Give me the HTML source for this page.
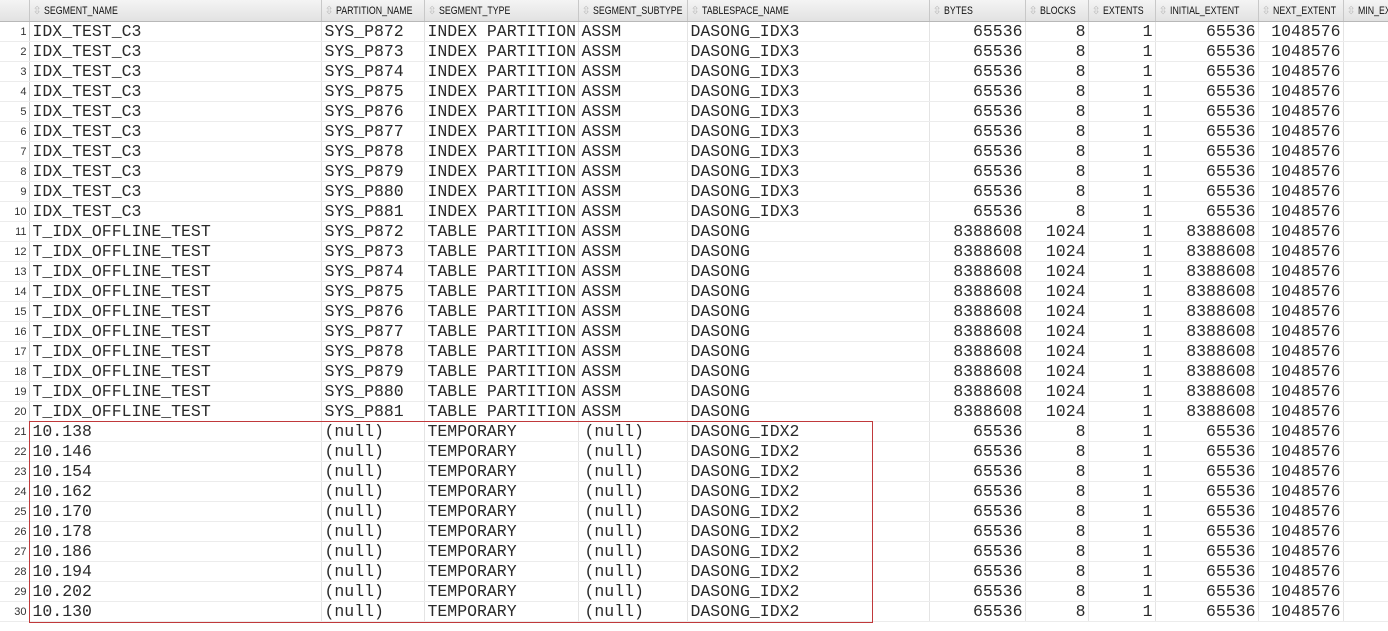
<!DOCTYPE html><html><head><style>
body{margin:0;width:1388px;height:631px;overflow:hidden;background:#fff;position:relative}
table{border-collapse:collapse;table-layout:fixed;position:absolute;left:0;top:0;width:1400px}
td,th{padding:0;overflow:hidden;white-space:nowrap;border-right:1px solid #e4e4e4;border-bottom:1px solid #ececec}
th{height:21px;background:linear-gradient(#f4f4f4,#e2e2e2);border-right:1px solid #c8c8c8;border-bottom:1px solid #b8b8b8;font:11px "Liberation Sans",sans-serif;color:#111;text-align:left;font-weight:normal}
th span{color:#bbb;font-size:11px;margin:0 2px 0 3px;display:inline-block;vertical-align:middle}
th b{font-weight:normal;display:inline-block;transform:scaleX(0.8);transform-origin:left center;vertical-align:middle}
td{height:19px;font:16.5px "Liberation Mono",monospace;color:#2a2a2a;padding-left:3px;line-height:19px}
td.n{font:11px "Liberation Sans",sans-serif;text-align:right;padding:0 2px 0 0;color:#333;border-right:1px solid #d0d0d0}
td.r{text-align:right;padding:0 2px 0 0}
td.s{padding-left:6px}
.box{position:absolute;left:29px;top:421px;width:842px;height:200px;border:1px solid #c0393b}
</style></head><body>
<table>
<colgroup><col style="width:29px"><col style="width:292px"><col style="width:103px"><col style="width:154px"><col style="width:109px"><col style="width:242px"><col style="width:96px"><col style="width:63px"><col style="width:67px"><col style="width:103px"><col style="width:85px"><col style="width:57px"></colgroup>
<tr><th></th><th><span>⇳</span><b>SEGMENT_NAME</b></th><th><span>⇳</span><b>PARTITION_NAME</b></th><th><span>⇳</span><b>SEGMENT_TYPE</b></th><th><span>⇳</span><b>SEGMENT_SUBTYPE</b></th><th><span>⇳</span><b>TABLESPACE_NAME</b></th><th><span>⇳</span><b>BYTES</b></th><th><span>⇳</span><b>BLOCKS</b></th><th><span>⇳</span><b>EXTENTS</b></th><th><span>⇳</span><b>INITIAL_EXTENT</b></th><th><span>⇳</span><b>NEXT_EXTENT</b></th><th><span>⇳</span><b>MIN_EXTENTS</b></th></tr>
<tr><td class="n">1</td><td>IDX_TEST_C3</td><td>SYS_P872</td><td>INDEX PARTITION</td><td>ASSM</td><td>DASONG_IDX3</td><td class="r">65536</td><td class="r">8</td><td class="r">1</td><td class="r">65536</td><td class="r">1048576</td><td></td></tr>
<tr><td class="n">2</td><td>IDX_TEST_C3</td><td>SYS_P873</td><td>INDEX PARTITION</td><td>ASSM</td><td>DASONG_IDX3</td><td class="r">65536</td><td class="r">8</td><td class="r">1</td><td class="r">65536</td><td class="r">1048576</td><td></td></tr>
<tr><td class="n">3</td><td>IDX_TEST_C3</td><td>SYS_P874</td><td>INDEX PARTITION</td><td>ASSM</td><td>DASONG_IDX3</td><td class="r">65536</td><td class="r">8</td><td class="r">1</td><td class="r">65536</td><td class="r">1048576</td><td></td></tr>
<tr><td class="n">4</td><td>IDX_TEST_C3</td><td>SYS_P875</td><td>INDEX PARTITION</td><td>ASSM</td><td>DASONG_IDX3</td><td class="r">65536</td><td class="r">8</td><td class="r">1</td><td class="r">65536</td><td class="r">1048576</td><td></td></tr>
<tr><td class="n">5</td><td>IDX_TEST_C3</td><td>SYS_P876</td><td>INDEX PARTITION</td><td>ASSM</td><td>DASONG_IDX3</td><td class="r">65536</td><td class="r">8</td><td class="r">1</td><td class="r">65536</td><td class="r">1048576</td><td></td></tr>
<tr><td class="n">6</td><td>IDX_TEST_C3</td><td>SYS_P877</td><td>INDEX PARTITION</td><td>ASSM</td><td>DASONG_IDX3</td><td class="r">65536</td><td class="r">8</td><td class="r">1</td><td class="r">65536</td><td class="r">1048576</td><td></td></tr>
<tr><td class="n">7</td><td>IDX_TEST_C3</td><td>SYS_P878</td><td>INDEX PARTITION</td><td>ASSM</td><td>DASONG_IDX3</td><td class="r">65536</td><td class="r">8</td><td class="r">1</td><td class="r">65536</td><td class="r">1048576</td><td></td></tr>
<tr><td class="n">8</td><td>IDX_TEST_C3</td><td>SYS_P879</td><td>INDEX PARTITION</td><td>ASSM</td><td>DASONG_IDX3</td><td class="r">65536</td><td class="r">8</td><td class="r">1</td><td class="r">65536</td><td class="r">1048576</td><td></td></tr>
<tr><td class="n">9</td><td>IDX_TEST_C3</td><td>SYS_P880</td><td>INDEX PARTITION</td><td>ASSM</td><td>DASONG_IDX3</td><td class="r">65536</td><td class="r">8</td><td class="r">1</td><td class="r">65536</td><td class="r">1048576</td><td></td></tr>
<tr><td class="n">10</td><td>IDX_TEST_C3</td><td>SYS_P881</td><td>INDEX PARTITION</td><td>ASSM</td><td>DASONG_IDX3</td><td class="r">65536</td><td class="r">8</td><td class="r">1</td><td class="r">65536</td><td class="r">1048576</td><td></td></tr>
<tr><td class="n">11</td><td>T_IDX_OFFLINE_TEST</td><td>SYS_P872</td><td>TABLE PARTITION</td><td>ASSM</td><td>DASONG</td><td class="r">8388608</td><td class="r">1024</td><td class="r">1</td><td class="r">8388608</td><td class="r">1048576</td><td></td></tr>
<tr><td class="n">12</td><td>T_IDX_OFFLINE_TEST</td><td>SYS_P873</td><td>TABLE PARTITION</td><td>ASSM</td><td>DASONG</td><td class="r">8388608</td><td class="r">1024</td><td class="r">1</td><td class="r">8388608</td><td class="r">1048576</td><td></td></tr>
<tr><td class="n">13</td><td>T_IDX_OFFLINE_TEST</td><td>SYS_P874</td><td>TABLE PARTITION</td><td>ASSM</td><td>DASONG</td><td class="r">8388608</td><td class="r">1024</td><td class="r">1</td><td class="r">8388608</td><td class="r">1048576</td><td></td></tr>
<tr><td class="n">14</td><td>T_IDX_OFFLINE_TEST</td><td>SYS_P875</td><td>TABLE PARTITION</td><td>ASSM</td><td>DASONG</td><td class="r">8388608</td><td class="r">1024</td><td class="r">1</td><td class="r">8388608</td><td class="r">1048576</td><td></td></tr>
<tr><td class="n">15</td><td>T_IDX_OFFLINE_TEST</td><td>SYS_P876</td><td>TABLE PARTITION</td><td>ASSM</td><td>DASONG</td><td class="r">8388608</td><td class="r">1024</td><td class="r">1</td><td class="r">8388608</td><td class="r">1048576</td><td></td></tr>
<tr><td class="n">16</td><td>T_IDX_OFFLINE_TEST</td><td>SYS_P877</td><td>TABLE PARTITION</td><td>ASSM</td><td>DASONG</td><td class="r">8388608</td><td class="r">1024</td><td class="r">1</td><td class="r">8388608</td><td class="r">1048576</td><td></td></tr>
<tr><td class="n">17</td><td>T_IDX_OFFLINE_TEST</td><td>SYS_P878</td><td>TABLE PARTITION</td><td>ASSM</td><td>DASONG</td><td class="r">8388608</td><td class="r">1024</td><td class="r">1</td><td class="r">8388608</td><td class="r">1048576</td><td></td></tr>
<tr><td class="n">18</td><td>T_IDX_OFFLINE_TEST</td><td>SYS_P879</td><td>TABLE PARTITION</td><td>ASSM</td><td>DASONG</td><td class="r">8388608</td><td class="r">1024</td><td class="r">1</td><td class="r">8388608</td><td class="r">1048576</td><td></td></tr>
<tr><td class="n">19</td><td>T_IDX_OFFLINE_TEST</td><td>SYS_P880</td><td>TABLE PARTITION</td><td>ASSM</td><td>DASONG</td><td class="r">8388608</td><td class="r">1024</td><td class="r">1</td><td class="r">8388608</td><td class="r">1048576</td><td></td></tr>
<tr><td class="n">20</td><td>T_IDX_OFFLINE_TEST</td><td>SYS_P881</td><td>TABLE PARTITION</td><td>ASSM</td><td>DASONG</td><td class="r">8388608</td><td class="r">1024</td><td class="r">1</td><td class="r">8388608</td><td class="r">1048576</td><td></td></tr>
<tr><td class="n">21</td><td>10.138</td><td>(null)</td><td>TEMPORARY</td><td class="s">(null)</td><td>DASONG_IDX2</td><td class="r">65536</td><td class="r">8</td><td class="r">1</td><td class="r">65536</td><td class="r">1048576</td><td></td></tr>
<tr><td class="n">22</td><td>10.146</td><td>(null)</td><td>TEMPORARY</td><td class="s">(null)</td><td>DASONG_IDX2</td><td class="r">65536</td><td class="r">8</td><td class="r">1</td><td class="r">65536</td><td class="r">1048576</td><td></td></tr>
<tr><td class="n">23</td><td>10.154</td><td>(null)</td><td>TEMPORARY</td><td class="s">(null)</td><td>DASONG_IDX2</td><td class="r">65536</td><td class="r">8</td><td class="r">1</td><td class="r">65536</td><td class="r">1048576</td><td></td></tr>
<tr><td class="n">24</td><td>10.162</td><td>(null)</td><td>TEMPORARY</td><td class="s">(null)</td><td>DASONG_IDX2</td><td class="r">65536</td><td class="r">8</td><td class="r">1</td><td class="r">65536</td><td class="r">1048576</td><td></td></tr>
<tr><td class="n">25</td><td>10.170</td><td>(null)</td><td>TEMPORARY</td><td class="s">(null)</td><td>DASONG_IDX2</td><td class="r">65536</td><td class="r">8</td><td class="r">1</td><td class="r">65536</td><td class="r">1048576</td><td></td></tr>
<tr><td class="n">26</td><td>10.178</td><td>(null)</td><td>TEMPORARY</td><td class="s">(null)</td><td>DASONG_IDX2</td><td class="r">65536</td><td class="r">8</td><td class="r">1</td><td class="r">65536</td><td class="r">1048576</td><td></td></tr>
<tr><td class="n">27</td><td>10.186</td><td>(null)</td><td>TEMPORARY</td><td class="s">(null)</td><td>DASONG_IDX2</td><td class="r">65536</td><td class="r">8</td><td class="r">1</td><td class="r">65536</td><td class="r">1048576</td><td></td></tr>
<tr><td class="n">28</td><td>10.194</td><td>(null)</td><td>TEMPORARY</td><td class="s">(null)</td><td>DASONG_IDX2</td><td class="r">65536</td><td class="r">8</td><td class="r">1</td><td class="r">65536</td><td class="r">1048576</td><td></td></tr>
<tr><td class="n">29</td><td>10.202</td><td>(null)</td><td>TEMPORARY</td><td class="s">(null)</td><td>DASONG_IDX2</td><td class="r">65536</td><td class="r">8</td><td class="r">1</td><td class="r">65536</td><td class="r">1048576</td><td></td></tr>
<tr><td class="n">30</td><td>10.130</td><td>(null)</td><td>TEMPORARY</td><td class="s">(null)</td><td>DASONG_IDX2</td><td class="r">65536</td><td class="r">8</td><td class="r">1</td><td class="r">65536</td><td class="r">1048576</td><td></td></tr>
</table>
<div class="box"></div>
</body></html>
